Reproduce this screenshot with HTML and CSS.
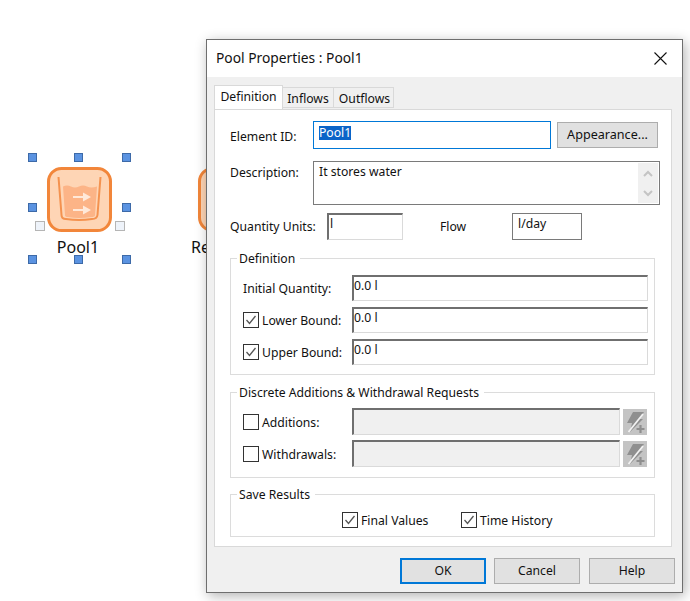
FILE: index.html
```html
<!DOCTYPE html>
<html lang="en">
<head>
  <meta charset="UTF-8" />
  <title>Pool Properties</title>
  <link rel="stylesheet" href="styles.css">
</head>
<body>
  <div class="canvas">
    <div class="node node-pool">
      <svg class="node-icon" viewBox="0 0 67 67" width="67" height="67">
        <rect x="2.500" y="2.500" width="62" height="62" rx="13" fill="#fed5b5" stroke="#f2863a" stroke-width="3"/>
        <path d="M17 20.500 Q21 18.500 25 20.500 T33 20.500 T41 20.500 T51 20.500 L49 49 Q49 51 45 51 Q33 53 22 51 Q19 51 19 49 Z" fill="#fcb487"/>
        <path d="M12.500 11 L15.500 49 Q15.500 53 20 53 Q33 55 46 53 Q51 53 51.500 49 L54.500 11" fill="none" stroke="#f4924f" stroke-width="2"/>
        <path d="M27 31 H38 M27 44 H38" fill="none" stroke="#ffe9d9" stroke-width="2.200"/>
        <path d="M37 26.500 L45 31 L37 35.500 Z M37 39.500 L45 44 L37 48.500 Z" fill="#ffe9d9"/>
      </svg>
      <span class="node-name">Pool1</span>
    </div>
    <span class="handle h1"></span><span class="handle h2"></span><span class="handle h3"></span>
    <span class="handle h4"></span><span class="handle h5"></span>
    <span class="handle h6"></span><span class="handle h7"></span><span class="handle h8"></span>
    <span class="port p1"></span><span class="port p2"></span>

    <div class="node node-other">
      <svg class="node-icon" viewBox="0 0 67 67" width="67" height="67">
        <rect x="2.500" y="2.500" width="62" height="62" rx="13" fill="#fed5b5" stroke="#f2863a" stroke-width="3"/>
      </svg>
      <span class="node-name">Re</span>
    </div>
  </div>

  <div class="dialog">
    <div class="titlebar">
      <span class="title">Pool Properties : Pool1</span>
      <svg class="close" viewBox="0 0 13 13" width="13" height="13">
        <path d="M0.500 0.500 L12.500 12.500 M12.500 0.500 L0.500 12.500" stroke="#111" stroke-width="1.100"/>
      </svg>
    </div>

    <div class="dialog-body">
      <div class="tabs">
        <div class="tab active">Definition</div>
        <div class="tab tab-inflows">Inflows</div>
        <div class="tab tab-outflows">Outflows</div>
      </div>

      <div class="panel">
        <div class="row">
          <label class="top-label">Element ID:</label>
          <div class="field field-id"><span class="selected">Pool1</span></div>
          <button class="btn btn-appearance">Appearance...</button>
        </div>

        <div class="row row-desc">
          <label class="top-label desc-label">Description:</label>
          <div class="field field-desc">
            <span>It stores water</span>
            <div class="scroller">
              <svg viewBox="0 0 10 7" width="10" height="7"><path d="M1 6 L5 2 L9 6" fill="none" stroke="#c4c4c4" stroke-width="2"/></svg>
              <svg viewBox="0 0 10 7" width="10" height="7"><path d="M1 1 L5 5 L9 1" fill="none" stroke="#c4c4c4" stroke-width="2"/></svg>
            </div>
          </div>
        </div>

        <div class="row row-units">
          <label class="top-label">Quantity Units:</label>
          <div class="field sunken field-units">l</div>
          <label class="flow-label">Flow</label>
          <div class="field field-flow">l/day</div>
        </div>

        <fieldset class="group group-def">
          <legend>Definition</legend>
          <div class="group-row">
            <label class="row-label">Initial Quantity:</label>
            <div class="field sunken field-num">0.0 l</div>
          </div>
          <div class="group-row">
            <label class="row-label">
              <span class="check"><svg viewBox="0 0 14 14" width="14" height="14"><path d="M2.500 7 L5.500 10.500 L11.500 3" fill="none" stroke="#555" stroke-width="1.300"/></svg></span>Lower Bound:
            </label>
            <div class="field sunken field-num">0.0 l</div>
          </div>
          <div class="group-row">
            <label class="row-label">
              <span class="check"><svg viewBox="0 0 14 14" width="14" height="14"><path d="M2.500 7 L5.500 10.500 L11.500 3" fill="none" stroke="#555" stroke-width="1.300"/></svg></span>Upper Bound:
            </label>
            <div class="field sunken field-num">0.0 l</div>
          </div>
        </fieldset>

        <fieldset class="group group-discrete">
          <legend>Discrete Additions &amp; Withdrawal Requests</legend>
          <div class="group-row">
            <label class="row-label"><span class="check"></span>Additions:</label>
            <div class="field sunken field-off"></div>
            <span class="bolt-btn">
              <svg viewBox="0 0 24 26" width="24" height="26">
                <path d="M10 3 H21 L16 10 H20 L7 23 L9 14 H4 Z" fill="#8f8f8f"/>
                <path d="M5.500 23 L20 5" stroke="#f2f2f2" stroke-width="1.800"/>
                <path d="M17.500 16 V24 M13.500 20 H21.500" stroke="#8f8f8f" stroke-width="2.200"/>
              </svg>
            </span>
          </div>
          <div class="group-row">
            <label class="row-label"><span class="check"></span>Withdrawals:</label>
            <div class="field sunken field-off"></div>
            <span class="bolt-btn">
              <svg viewBox="0 0 24 26" width="24" height="26">
                <path d="M10 3 H21 L16 10 H20 L7 23 L9 14 H4 Z" fill="#8f8f8f"/>
                <path d="M5.500 23 L20 5" stroke="#f2f2f2" stroke-width="1.800"/>
                <path d="M17.500 16 V24 M13.500 20 H21.500" stroke="#8f8f8f" stroke-width="2.200"/>
              </svg>
            </span>
          </div>
        </fieldset>

        <fieldset class="group group-save">
          <legend>Save Results</legend>
          <div class="save-row">
            <label class="save-item">
              <span class="check"><svg viewBox="0 0 14 14" width="14" height="14"><path d="M2.500 7 L5.500 10.500 L11.500 3" fill="none" stroke="#555" stroke-width="1.300"/></svg></span>Final Values
            </label>
            <label class="save-item">
              <span class="check"><svg viewBox="0 0 14 14" width="14" height="14"><path d="M2.500 7 L5.500 10.500 L11.500 3" fill="none" stroke="#555" stroke-width="1.300"/></svg></span>Time History
            </label>
          </div>
        </fieldset>
      </div>

      <div class="footer">
        <button class="btn btn-foot btn-default">OK</button>
        <button class="btn btn-foot">Cancel</button>
        <button class="btn btn-foot btn-help">Help</button>
      </div>
    </div>
  </div>
</body>
</html>
```

FILE: styles.css
```css
* {
  box-sizing: border-box;
}
html, body {
  margin: 0;
  height: 100%;
}
body {
  width: 690px;
  height: 601px;
  overflow: hidden;
  background: #fff;
  font-family: "Noto Sans", "Open Sans", sans-serif;
  font-size: 12.2px;
  color: #111;
  position: relative;
}

/* diagram canvas */
.canvas {
  position: absolute;
  inset: 0;
}
.node {
  position: absolute;
  top: 166px;
  display: flex;
  flex-direction: column;
  align-items: center;
}
.node-pool {
  left: 46px;
}
.node-other {
  left: 197px;
}
.node-icon {
  display: block;
}
.node-name {
  font-size: 16px;
  line-height: 20px;
  margin: 4px 3px 0 0;
}
.node-other .node-name {
  align-self: flex-start;
  margin-left: -6px;
}
.handle {
  position: absolute;
  width: 9px;
  height: 9px;
  background: #5b93e1;
  border: 1px solid #3d6aa8;
}
.h1 { left: 28px; top: 153px; }
.h2 { left: 74px; top: 153px; }
.h3 { left: 122px; top: 153px; }
.h4 { left: 28px; top: 203px; }
.h5 { left: 122px; top: 203px; }
.h6 { left: 28px; top: 255px; }
.h7 { left: 74px; top: 255px; }
.h8 { left: 122px; top: 255px; }
.port {
  position: absolute;
  width: 10px;
  height: 10px;
  background: #eef3fa;
  border: 1px solid #b5b5b5;
  top: 221px;
}
.p1 { left: 35px; }
.p2 { left: 115px; }

/* dialog */
.dialog {
  position: absolute;
  left: 206px;
  top: 39px;
  width: 477px;
  height: 554px;
  background: #f0f0f0;
  border: 1px solid #6e6e6e;
  box-shadow: 2px 3px 12px rgba(0, 0, 0, 0.3);
  display: flex;
  flex-direction: column;
}
.titlebar {
  height: 37px;
  flex: none;
  background: #fff;
  display: flex;
  align-items: center;
  justify-content: space-between;
  padding: 0 15px 0 9px;
}
.title {
  font-size: 13.8px;
  margin-bottom: 2px;
}
.dialog-body {
  flex: 1;
  padding: 8px 10px 0 7px;
  display: flex;
  flex-direction: column;
}

.tabs {
  display: flex;
  align-items: flex-end;
  height: 24px;
  flex: none;
  position: relative;
  z-index: 1;
}
.tab {
  height: 21px;
  padding-top: 2px;
  text-align: center;
  background: #f0f0f0;
  border: 1px solid #d9d9d9;
  border-left: none;
  margin-bottom: 1px;
}
.tab.active {
  width: 69px;
  height: 24px;
  margin-bottom: 0;
  background: #fff;
  border-left: 1px solid #d9d9d9;
  border-bottom: none;
}
.tab-inflows {
  width: 51px;
}
.tab-outflows {
  width: 60px;
  padding-left: 2px;
}

.panel {
  width: 458px;
  height: 438px;
  flex: none;
  background: #fff;
  border: 1px solid #d9d9d9;
  padding: 11px 0 0 15px;
}

.row {
  display: flex;
  align-items: flex-start;
}
.top-label {
  width: 83px;
  flex: none;
  padding-top: 7px;
}
.desc-label {
  padding-top: 3px;
}
.row-desc {
  margin-top: 12px;
}
.row-units {
  margin-top: 8px;
}
.row-units .top-label {
  width: 97px;
  padding-top: 5px;
}

.field {
  border: 1px solid #7a7a7a;
  background: #fff;
  line-height: 16px;
  padding: 1px 2px;
}
.sunken {
  border-color: #dadada;
  border-top: 2px solid #6f6f6f;
  border-left: 2px solid #6f6f6f;
}
.field-id {
  width: 238px;
  height: 28px;
  border-color: #0078d7;
  padding: 4px 5px;
  line-height: 14px;
}
.selected {
  background: #0a64c8;
  color: #fff;
  display: inline-block;
  height: 14px;
  line-height: 14px;
  vertical-align: top;
}
.btn {
  font: inherit;
  color: #111;
  background: #e1e1e1;
  border: 1px solid #adadad;
  padding: 0 0 2px;
}
.btn-appearance {
  width: 101px;
  height: 26px;
  margin: 1px 0 0 6px;
  font-size: 12.6px;
}
.field-desc {
  width: 347px;
  height: 44px;
  padding: 2px 5px;
  display: flex;
  justify-content: space-between;
}
.scroller {
  width: 20px;
  height: 40px;
  margin: -1px -4px 0 0;
  background: #f0f0f0;
  display: flex;
  flex-direction: column;
  justify-content: space-around;
  align-items: center;
}
.scroller svg {
  display: block;
}
.field-units {
  width: 76px;
  height: 27px;
  padding: 1px;
}
.flow-label {
  width: 109px;
  padding: 5px 0 0 37px;
  flex: none;
}
.field-flow {
  width: 70px;
  height: 27px;
  padding: 2px 5px;
}

/* group boxes */
.group {
  width: 425px;
  margin: 0;
  padding: 0;
  border: 1px solid #dcdcdc;
  min-width: 0;
}
.group legend {
  margin-left: 6px;
  padding: 0 5px 0 2px;
  line-height: 18px;
  height: 16px;
}
.group-def {
  margin-top: 10px;
  height: 125px;
  padding-top: 9px;
}
.group-discrete {
  margin-top: 9px;
  height: 94px;
  padding-top: 8px;
}
.group-save {
  margin-top: 8px;
  height: 51px;
  padding-top: 10px;
}
.group-row {
  display: flex;
  align-items: flex-start;
  height: 26px;
  margin: 0 0 6px 12px;
}
.group-discrete .group-row {
  height: 27px;
  margin-bottom: 5px;
}
.row-label {
  width: 109px;
  flex: none;
  display: flex;
  align-items: center;
  height: 26px;
}
.group-discrete .row-label {
  height: 28px;
}
.check {
  width: 16px;
  height: 16px;
  flex: none;
  margin-right: 3px;
  border: 1px solid #333;
  background: #fff;
  display: inline-flex;
}
.field-num {
  width: 296px;
  height: 26px;
  padding: 1px 0 0;
}
.field-off {
  width: 268px;
  height: 27px;
  background: #f0f0f0;
}
.bolt-btn {
  width: 24px;
  height: 26px;
  margin: 1px 0 0 3px;
  background: #c4c4c4;
  display: block;
}
.bolt-btn svg {
  display: block;
}
.save-row {
  display: flex;
  margin-left: 111px;
}
.save-item {
  width: 119px;
  display: flex;
  align-items: center;
  height: 16px;
}

/* bottom buttons */
.footer {
  display: flex;
  justify-content: flex-end;
  gap: 8px;
  padding: 11px 0 0 0;
  margin-right: -3px;
}
.btn-foot {
  width: 86px;
  height: 26px;
}
.btn-default {
  border: 2px solid #0078d7;
}
.btn-help {
  margin-left: 1px;
}
```
